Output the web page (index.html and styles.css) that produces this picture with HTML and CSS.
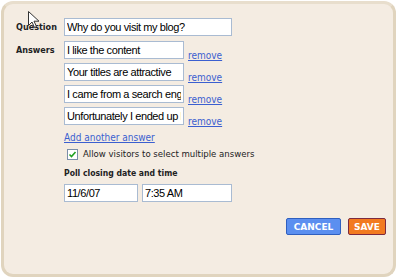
FILE: index.html
```html
<!doctype html>
<html lang="en">
  <head>
    <meta charset="utf-8" />
    <title>Poll settings</title>
    <link rel="stylesheet" href="styles.css">
  </head>
  <body>
    <div class="panel">
      <div class="form">
        <label class="label">Question</label>
        <div class="field">
          <input class="text wide" type="text" value="Why do you visit my blog?" />
        </div>

        <label class="label">Answers</label>
        <div class="field answers">
          <div class="answer">
            <input class="text" type="text" value="I like the content" />
            <a href="#">remove</a>
          </div>
          <div class="answer">
            <input class="text" type="text" value="Your titles are attractive" />
            <a href="#">remove</a>
          </div>
          <div class="answer">
            <input class="text" type="text" value="I came from a search engine" />
            <a href="#">remove</a>
          </div>
          <div class="answer">
            <input class="text" type="text" value="Unfortunately I ended up here" />
            <a href="#">remove</a>
          </div>
          <a class="add" href="#">Add another answer</a>
          <div class="check">
            <span class="box">
              <svg width="9" height="9" viewBox="0 0 9 9">
                <path d="M1.5 4.5l2 2 4-4.5" fill="none" stroke="#21a121" stroke-width="1.6" />
              </svg>
            </span>
            Allow visitors to select multiple answers
          </div>
          <div class="sub">Poll closing date and time</div>
          <div class="when">
            <input class="text date" type="text" value="11/6/07" />
            <input class="text time" type="text" value="7:35 AM" />
          </div>
        </div>
      </div>

      <div class="actions">
        <button class="btn cancel">CANCEL</button>
        <button class="btn save">SAVE</button>
      </div>

      <!-- mouse pointer left over the label -->
      <svg class="cursor" width="12" height="18" viewBox="0 0 12 18">
        <path d="M0.5 0.5v14l3.5-3.5 2.5 5.5 2-1-2.5-5.3h5z" fill="#fff" stroke="#333" stroke-width="1" />
      </svg>
    </div>
  </body>
</html>
```

FILE: styles.css
```css
:root {
  --panel-bg: #f4ece2;
  --panel-border: #e0d4be;
  --input-border: #a9bbd2;
  --link-color: #3b5fd0;
  --text-color: #222222;
}

body {
  margin: 0;
  background: #ffffff;
  font-family: Tahoma, 'DejaVu Sans Condensed', 'DejaVu Sans', sans-serif;
  color: var(--text-color);
}

.panel {
  position: relative;
  box-sizing: border-box;
  width: 395px;
  height: 276px;
  margin: 1px 0 0 1px;
  padding: 14px 7px 0 12px;
  background: var(--panel-bg);
  border: 3px solid var(--panel-border);
  border-top-color: #e8decd;
  border-radius: 12px;
}

.form {
  display: grid;
  grid-template-columns: 48px 1fr;
  row-gap: 5px;
}

.label {
  font-size: 9px;
  font-weight: bold;
  padding-top: 4px;
}

.field {
  display: flex;
  flex-direction: column;
}

.text {
  box-sizing: border-box;
  height: 18px;
  width: 120px;
  margin: 0;
  padding: 0 2px;
  border: 1px solid var(--input-border);
  background: #ffffff;
  font-family: 'Liberation Sans', Arial, sans-serif;
  font-size: 11px;
  letter-spacing: -0.4px;
  color: #000000;
}

.wide {
  width: 168px;
}

.answers {
  gap: 4px;
}

.answer {
  display: flex;
  align-items: flex-end;
  gap: 4px;
  height: 18px;
}

a {
  color: var(--link-color);
  font-size: 10px;
}

.answer a {
  position: relative;
  top: 2px;
}

.add {
  margin-top: 3px;
  line-height: 12px;
}

.check {
  display: flex;
  align-items: center;
  gap: 5px;
  margin: 0 0 0 3px;
  font-size: 9.5px;
  line-height: 12px;
}

.box {
  display: flex;
  align-items: center;
  justify-content: center;
  box-sizing: border-box;
  width: 11px;
  height: 11px;
  border: 1px solid #7a8ea8;
  background: #ffffff;
}

.sub {
  margin-top: 3px;
  font-size: 8.6px;
  font-weight: bold;
  line-height: 12px;
}

.when {
  display: flex;
  gap: 4px;
  margin-top: 1px;
}

.date {
  width: 74px;
}

.time {
  width: 90px;
}

.actions {
  display: flex;
  justify-content: flex-end;
  gap: 7px;
  margin-top: 16px;
}

.btn {
  height: 17px;
  padding: 0 5px;
  border-radius: 2px;
  font-family: Tahoma, 'DejaVu Sans', sans-serif;
  font-size: 9px;
  font-weight: bold;
  color: #ffffff;
}

.cancel {
  width: 55px;
  background: #5b8ff0;
  border: 1px solid #2f5fbf;
}

.save {
  width: 38px;
  background: #f27a20;
  border: 1px solid #7c2a40;
}

.cursor {
  position: absolute;
  left: 24px;
  top: 7px;
}
```
